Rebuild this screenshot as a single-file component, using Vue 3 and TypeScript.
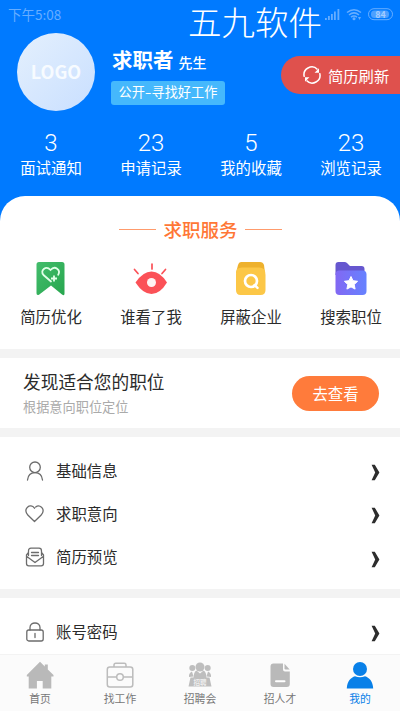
<script setup lang="ts">
interface Stat { value: number; label: string }
interface Entry { icon: string; label: string }

const stats: Stat[] = [
  { value: 3, label: '面试通知' },
  { value: 23, label: '申请记录' },
  { value: 5, label: '我的收藏' },
  { value: 23, label: '浏览记录' },
]
const services: Entry[] = [
  { icon: 'bookmark', label: '简历优化' },
  { icon: 'eye', label: '谁看了我' },
  { icon: 'block', label: '屏蔽企业' },
  { icon: 'folder', label: '搜索职位' },
]
const profileRows: Entry[] = [
  { icon: 'person', label: '基础信息' },
  { icon: 'heart', label: '求职意向' },
  { icon: 'mail', label: '简历预览' },
]
const accountRows: Entry[] = [{ icon: 'lock', label: '账号密码' }]
const groups: Entry[][] = [profileRows, accountRows]
const tabs: Entry[] = [
  { icon: 'home', label: '首页' },
  { icon: 'case', label: '找工作' },
  { icon: 'fair', label: '招聘会' },
  { icon: 'doc', label: '招人才' },
  { icon: 'me', label: '我的' },
]
</script>

<template>
  <div class="screen">
    <header class="hero">
      <div class="status">
        <span class="time">下午5:08</span>
        <svg class="status-icons" width="76" height="16" viewBox="0 0 76 16">
          <g fill="#66adff">
            <path d="M7 12h1.800v2H7zM10 10h1.800v4H10zM13 8h1.800v6H13zM16 5.500h1.800V14H16zM19.500 3h1.800v11h-1.800z" />
            <circle cx="36" cy="12.700" r="1.500" />
            <path d="M40 11h3l-1.500 3z" />
          </g>
          <g fill="none" stroke="#66adff" stroke-width="1.500">
            <path d="M29 6.500Q36 .8 43 6.500M31 9Q36 4.800 41 9M33 11.200Q36 8.800 39 11.200" />
            <rect x="50.500" y="2.700" width="24" height="11" rx="5.500" stroke-width="1" />
          </g>
          <rect x="53" y="4.500" width="18" height="7.500" rx="3.500" fill="#4da0ff" />
          <text x="62.500" y="11.700" class="battery" text-anchor="middle">84</text>
        </svg>
      </div>
      <div class="watermark">五九软件</div>

      <div class="profile">
        <div class="avatar">LOGO</div>
        <div class="who">
          <div class="name">求职者<small>先生</small></div>
          <div class="tag">公开<i>-</i>寻找好工作</div>
        </div>
        <button class="refresh">
          <svg width="18" height="18" viewBox="0 0 19 19">
            <g fill="none" stroke="#fff" stroke-width="1.600">
              <path d="M1.400 11.500A8.200 8.200 0 0 1 15.300 3.700M17.600 7.500A8.200 8.200 0 0 1 3.700 15.300" />
            </g>
            <path d="M16.900 2.500v4.700h-4.700zM2.100 16.500v-4.700h4.700z" fill="#fff" />
          </svg>
          <span>简历刷新</span>
        </button>
      </div>

      <div class="stats">
        <div v-for="s in stats" :key="s.label" class="stat">
          <b>{{ s.value }}</b>
          <span>{{ s.label }}</span>
        </div>
      </div>
    </header>

    <section class="services">
      <h2><i></i>求职服务<i></i></h2>
      <div class="service-grid">
        <div v-for="s in services" :key="s.label" class="service">
          <svg width="36" height="36" viewBox="0 0 36 36">
            <template v-if="s.icon === 'bookmark'">
              <defs>
                <linearGradient id="green" x2="1" y2="1"><stop stop-color="#43bd6c" /><stop offset="1" stop-color="#27a64e" /></linearGradient>
              </defs>
              <path d="M3.500 3.500Q3.500 1 6 1h23Q31.500 1 31.500 3.500v29q0 3-2.500 1L18 24.500 6 33.800q-2.500 1-2.500-1.500z" fill="url(#green)" />
              <path d="M18 20.500L10.500 14C6.500 9.500 13 4 17.500 9 22 4 28 9 25.200 13.700" fill="none" stroke="#e2ffe9" stroke-width="1.800" stroke-linecap="round" />
              <path d="M21 14.500v6M18 17.500h6" stroke="#e2ffe9" stroke-width="1.800" />
            </template>
            <template v-else-if="s.icon === 'eye'">
              <path d="M2.500 21.500Q10 10.500 18.500 10.500T34 21.500Q27 33 18.500 33T2.500 21.500Z" fill="#fb5157" />
              <path d="M19 3v5M1.500 8.500l3.500 4M32.500 8.500l-3.500 4" stroke="#fb5157" stroke-width="1.700" stroke-linecap="round" />
              <circle cx="18.500" cy="21.500" r="4.500" fill="#fff3f2" />
            </template>
            <template v-else-if="s.icon === 'block'">
              <path d="M8 1h19q3 0 4 3l1 8H3l2-8q.8-3 3-3z" fill="#eeb12d" />
              <path d="M4 8q2-1.500 5-1.500h17q4 0 5.500 2.500 1 2 1 5v15q0 5-5 5h-20q-4.500 0-4.500-5V14q0-4 1-6z" fill="#fcc747" />
              <circle cx="18" cy="20" r="6" fill="none" stroke="#fff" stroke-width="2.700" />
              <path d="M21.500 24l3 2.800" stroke="#fff" stroke-width="2.500" stroke-linecap="round" />
            </template>
            <template v-else>
              <defs>
                <linearGradient id="violet" x2="1"><stop stop-color="#8268f3" /><stop offset="1" stop-color="#6682ff" /></linearGradient>
              </defs>
              <path d="M2.500 14V4q0-3 3-3h6q1.500 0 2.500 1l3 3h11.500q3 0 3 3v6z" fill="#6657cf" />
              <rect x="2.500" y="9.500" width="31" height="24.500" rx="4" fill="url(#violet)" />
              <path d="M18 15.500l2 4.200 4.600.6-3.400 3.200.9 4.600-4.100-2.200-4.100 2.200.9-4.600-3.400-3.200 4.600-.6z" fill="#fff" stroke="#fff" stroke-width="1" stroke-linejoin="round" />
            </template>
          </svg>
          <span>{{ s.label }}</span>
        </div>
      </div>
    </section>

    <section class="discover">
      <div>
        <h3>发现适合您的职位</h3>
        <p>根据意向职位定位</p>
      </div>
      <button>去查看</button>
    </section>

    <section v-for="(rows, g) in groups" :key="g" class="list">
      <div v-for="r in rows" :key="r.label" class="row">
        <svg class="row-icon" width="20" height="20" viewBox="0 0 20 20">
          <template v-if="r.icon === 'person'">
            <circle cx="10" cy="6.300" r="5.300" />
            <path d="M2.500 19C3 14 6 11.600 10 11.600S17 14 17.500 19" />
          </template>
          <path v-else-if="r.icon === 'heart'" d="M9.500 4.200C7.500 1.500 4.500 1.300 2.500 3.200c-2.400 2.200-2 5.500.3 7.800L9.500 17.500l6.700-6.500c2.300-2.300 2.700-5.600.3-7.800-1.700-1.600-4-1.700-5.800-.2" />
          <template v-else-if="r.icon === 'mail'">
            <path d="M3.500 8.500V4q0-2.800 2.500-2.800h8q2.500 0 2.500 2.800v4.500M3.500 5.500L1.500 8v8.500q0 2.300 2.300 2.300h12.400q2.300 0 2.300-2.300V8l-2-2.500M1.800 9.500L10 15.500l8.200-6M6.500 5.500h7M6.500 8.500h7" />
          </template>
          <template v-else>
            <rect x="1.800" y="8" width="16.400" height="11" rx="2" />
            <path d="M5 8V5.500C5 -.5 15 -.5 15 5.500V8M10 11.500v4" />
          </template>
        </svg>
        <span>{{ r.label }}</span>
        <svg class="chevron" width="9" height="17" viewBox="0 0 9 17">
          <path d="M.6.700h3.200L8.400 8.500 3.800 16.300H.6L4.200 8.500z" />
        </svg>
      </div>
    </section>

    <nav class="tabs">
      <div v-for="t in tabs" :key="t.label" class="tab" :class="{ active: t.icon === 'me' }">
        <svg width="28" height="28" viewBox="0 0 28 28">
          <path v-if="t.icon === 'home'" d="M14 .8L18.800 5.500V3.500h3v5L27.500 14v1.500h-2.200V27.500h-8.600v-7.500h-5.800v7.500H2.700v-12H.8V14z" fill="#b9b9b9" />
          <g v-else-if="t.icon === 'case'" fill="none" stroke="#bcbcbc" stroke-width="1.500">
            <rect x="1.300" y="6" width="25.500" height="20" rx="2.500" />
            <path d="M8 6V4q0-1.700 1.700-1.700h8.600Q20 2.300 20 4v2M1.500 16h9M17.500 16h9.300" />
            <circle cx="14" cy="16" r="3.300" />
          </g>
          <template v-else-if="t.icon === 'fair'">
            <g fill="#bebebe">
              <circle cx="14" cy="6" r="4.500" />
              <path d="M7.500 17q0-6 3-7.500l3.500 3 3.500-3q3 1.500 3 7.500z" />
              <circle cx="6.300" cy="7" r="3" /><circle cx="21.700" cy="7" r="3" />
              <path d="M3 16q-.5-4 3-5.500l1.500 5zM25 16q.5-4-3-5.500l-1.500 5zM4.500 16.500h19l2 9H2.500z" />
            </g>
            <text x="14" y="24.300" class="fair-text" text-anchor="middle">招聘</text>
          </template>
          <template v-else-if="t.icon === 'doc'">
            <path d="M7.500 2.500H17v6q0 2 2 2h4.800V23q0 3-3 3H7.500q-3 0-3-3V5.500q0-3 3-3z" fill="#b9b9b9" />
            <path d="M18.500 2.800L23.700 8.500h-4q-1.200 0-1.200-1.200z" fill="#b9b9b9" />
            <path d="M10 20.300h8.500" stroke="#fff" stroke-width="2" stroke-linecap="round" />
          </template>
          <template v-else>
            <circle cx="14" cy="8" r="7" fill="#0980e8" />
            <path d="M.8 27.500C1 20 5 16.500 9 15.200q5 2 10 0C23 16.500 27 20 27.200 27.500z" fill="#0980e8" />
          </template>
        </svg>
        <span>{{ t.label }}</span>
      </div>
    </nav>
  </div>
</template>

<style>
body { margin: 0; }
</style>

<style scoped>
* { box-sizing: border-box; }
.screen {
  width: 400px; height: 711px; overflow: hidden; position: relative;
  display: flex; flex-direction: column;
  background: #f3f3f3; color: #2b2b2b;
  font-family: "Noto Sans CJK SC", sans-serif;
}
svg { display: block; flex: none; }
button { border: 0; padding: 0; color: #fff; font-family: inherit; }
.hero { height: 240px; flex: none; background: #007aff; color: #fff; }
.status { height: 31px; padding: 6px 6px 0 8px; display: flex; justify-content: space-between; }
.time { font-size: 13.500px; line-height: 17px; color: #66adff; }
.battery { font: 700 9px Roboto, sans-serif; fill: #a3ccff; }
.watermark {
  position: absolute; left: 188px; top: 0; white-space: nowrap;
  font-size: 33.500px; line-height: 41px; font-weight: 300;
}
.profile { height: 93px; display: flex; padding-left: 17px; }
.avatar {
  width: 78px; height: 78px; margin-top: 2px; border-radius: 50%; flex: none;
  background: linear-gradient(135deg, #e4f0fd, #c9dfff);
  font-size: 18px; line-height: 77px; font-weight: 700; text-align: center; color: #f7fbff;
}
.who { margin-left: 16px; padding-top: 14px; width: 170px; flex: none; }
.name { font-size: 20.500px; line-height: 28px; font-weight: 700; padding-left: 1px; white-space: nowrap; }
.name small { font-size: 14px; font-weight: 500; margin-left: 5px; }
.tag {
  width: 114px; height: 24px; margin-top: 5px; border-radius: 3px; background: #45b8fc;
  font-size: 13.200px; line-height: 22px; text-align: center; white-space: nowrap;
}
.tag i { display: inline-block; font-style: normal; transform: scaleX(1.500); margin: 0 1px; }
.refresh {
  flex: 1; height: 38px; margin-top: 25px; border-radius: 19px 0 0 19px; background: #df514d;
  display: flex; align-items: center; gap: 7px; padding-left: 22px;
  font-size: 15.300px; white-space: nowrap;
}
.stats { display: grid; grid-template-columns: repeat(4, 100px); padding: 5px 0 0 1px; }
.stat { display: flex; flex-direction: column; align-items: center; }
.stat b { font: 300 24px/28px Roboto, sans-serif; }
.stat span { font-size: 15.400px; line-height: 21px; }
.services {
  height: 153px; flex: none; margin-top: -44px; background: #fff;
  border-radius: 25px 25px 0 0;
}
h2 {
  margin: 0; padding-top: 18px; display: flex; justify-content: center; align-items: center; gap: 7px;
  font-size: 18.500px; line-height: 30px; font-weight: 500; color: #ff7736;
  padding-left: 1px;
}
h2 i { width: 37px; height: 1px; background: #ff9b6c; }
.service-grid { display: grid; grid-template-columns: repeat(4, 100px); padding: 17px 0 0 1px; }
.service { display: flex; flex-direction: column; align-items: center; }
.service span { font-size: 15.400px; line-height: 22px; margin-top: 8px; }
.discover {
  height: 70px; flex: none; margin-top: 9px; padding: 0 21px 0 23px; background: #fff;
  display: flex; justify-content: space-between; align-items: center;
}
h3 { margin: 0; font-size: 17.700px; line-height: 24px; font-weight: 400; }
p { margin: 4px 0 0; font-size: 13.200px; line-height: 20px; color: #aaa; }
.discover button {
  width: 87px; height: 35px; border-radius: 18px; background: #ff7b3b;
  font-size: 15.400px; line-height: 34px;
}
.list { flex: none; margin-top: 9px; padding: 12px 20px 10px 25px; background: #fff; }
.row { height: 43.300px; display: flex; align-items: center; font-size: 15.400px; line-height: 22px; }
.row span { margin: 0 0 2px 11px; flex: 1; }
.row-icon { fill: none; stroke: #6c6c6c; stroke-width: 1.300; stroke-linecap: round; stroke-linejoin: round; }
.chevron { fill: #2d2d2d; position: relative; top: 2px; }
.tabs {
  position: absolute; left: 0; bottom: 0; width: 400px; height: 57px;
  display: grid; grid-template-columns: repeat(5, 80px); padding-top: 6px;
  background: #fbfbfb; border-top: 1px solid #f3f3f3;
}
.tab { display: flex; flex-direction: column; align-items: center; font-size: 10.800px; line-height: 16px; color: #777; }
.tab span { margin-top: 1px; }
.tab.active { color: #0980e8; }
.fair-text { font-size: 6.500px; font-weight: 700; fill: #eee; }
</style>
